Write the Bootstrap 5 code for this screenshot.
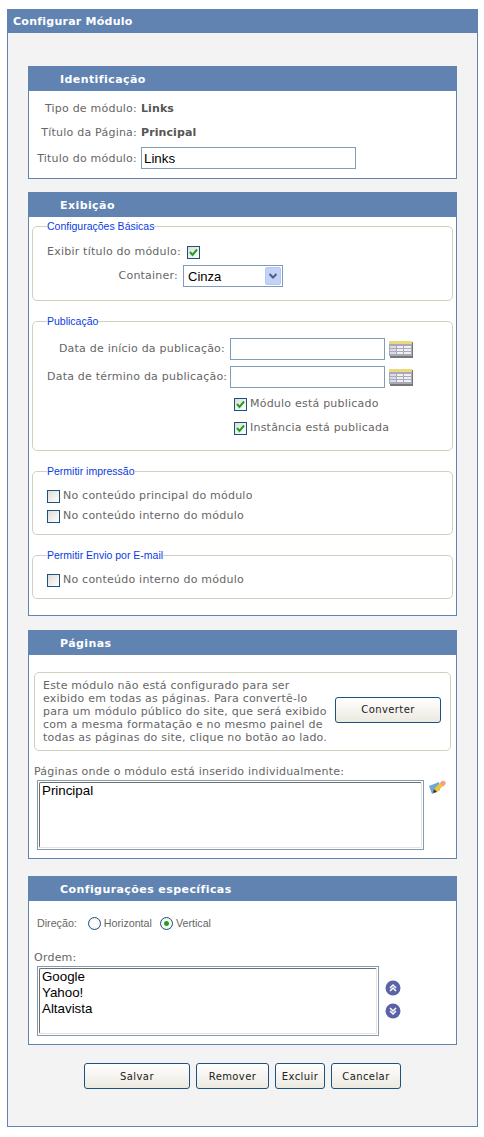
<!DOCTYPE html>
<html lang="pt-BR">

<head>
    <meta charset="UTF-8">
    <meta name="viewport" content="width=device-width, initial-scale=1.0">
    <link href="https://cdn.jsdelivr.net/npm/bootstrap@5.3.2/dist/css/bootstrap.min.css" rel="stylesheet">
    <style>
        body { background: #fff; font-family: "DejaVu Sans", Verdana, sans-serif; font-size: 11px; letter-spacing: .22px; color: #666; }
        .janela { width: 471px; height: 1118px; margin: 9px 0 0 7px; border: 1px solid #6083b2; border-top: 0; background: #f3f3f3; }
        .janela-titulo { height: 24px; margin: 0 -1px; padding-left: 6px; background: #6083b2; color: #fff; font-weight: 700; letter-spacing: .25px; line-height: 26px; }
        .conteudo { padding: 33px 20px 0; }
        .painel { width: 429px; background: #fff; border: 1px solid #6083b2; }
        .painel-titulo { height: 24px; margin: 0 -1px; padding-left: 32px; background: #6083b2; color: #fff; font-weight: 700; letter-spacing: .42px; line-height: 25px; }
        .p1 { height: 113px; margin-bottom: 13px; }
        .p2 { height: 424px; margin-bottom: 14px; }
        .p3 { height: 229px; margin-bottom: 17px; }
        .p4 { height: 169px; margin-bottom: 18px; }

        .p1-corpo { padding-top: 6px; }
        .linha { height: 24px; }
        .linha-campo { height: 24px; margin-top: 1px; }
        .linha-campo .rotulo { padding-top: 2px; }
        .linha-data { height: 28px; }
        .linha-imp { height: 20px; }
        .primeira-imp { margin-top: 9px; }
        .rotulo { flex: none; text-align: right; margin-right: 4px; white-space: nowrap; }
        .forte { font-weight: 700; letter-spacing: .1px; color: #555; }
        .rot1 { width: 108px; }
        .rot2 { width: 131px; margin-right: 5px; }
        .rot3 { width: 178px; margin-right: 5px; }

        fieldset.grupo { margin: 0 3px; padding: 0 14px; border: 1px solid #d0d0bf; border-radius: 5px; }
        fieldset.grupo legend { float: none; width: auto; margin: 0; padding: 0; font: 10.5px/12px "Liberation Sans", Arial, sans-serif; letter-spacing: 0; color: #0a3ce0; }
        .g1 { height: 81px; margin-top: 3px !important; }
        .g2 { height: 136px; margin-top: 14px !important; }
        .g3 { height: 70px; margin-top: 14px !important; }
        .g4 { height: 50px; margin-top: 14px !important; }

        input.campo { height: 22px; padding: 0 2px; border: 1px solid #7f9db9; border-radius: 0; outline: 0; font: 13.33px "Liberation Sans", Arial, sans-serif; letter-spacing: 0; color: #000; background: #fff; }
        .titulo-campo { width: 215px; }
        .campo-data { width: 155px; }
        select.combo { width: 100px; height: 22px; padding: 0 20px 0 4px; border: 1px solid #7f9db9; border-radius: 0; appearance: none; font: 13px "Liberation Sans", Arial, sans-serif; letter-spacing: 0; color: #000; background: #fff url("data:image/svg+xml,%3Csvg xmlns='http://www.w3.org/2000/svg' width='16' height='18'%3E%3Crect x='.5' y='.5' width='15' height='17' rx='1.5' fill='%23c3d3f8' stroke='%23b4c8f4'/%3E%3Cpath d='M4.5 7l3.5 3.5L11.500 7' fill='none' stroke='%234d6185' stroke-width='2'/%3E%3C/svg%3E") no-repeat right 1px center; }

        input.marca { appearance: none; flex: none; width: 13px; height: 13px; margin: 0 3px 0 0; border: 1px solid #1c5180; background: linear-gradient(135deg, #dcdcd7, #fff); }
        input.marca:checked { background-image: url("data:image/svg+xml,%3Csvg xmlns='http://www.w3.org/2000/svg' width='11' height='11'%3E%3Cpath d='M2 5l2.500 3L9 2.500' fill='none' stroke='%2321a121' stroke-width='2'/%3E%3C/svg%3E"), linear-gradient(135deg, #dcdcd7, #fff); background-size: 11px 11px, auto; background-repeat: no-repeat; }
        input.radio-x { appearance: none; flex: none; width: 13px; height: 13px; margin: 0 3px 0 0; border: 1px solid #1c5180; border-radius: 50%; background: radial-gradient(circle, #fff 40%, #e2e2dc 100%); }
        input.radio-x:checked { background: radial-gradient(circle, #21a121 0, #21a121 2px, #fff 3px, #e2e2dc 100%); }
        .recuo-pub { padding-left: 187px; }
        .recuo-pub-1 { margin-top: 1px; }

        .aviso { margin: 17px 5px 0; height: 79px; padding: 7px 8px; border: 1px solid #d0d0bf; border-radius: 5px; line-height: 13px; }
        .aviso-texto { width: 286px; flex: none; white-space: nowrap; }
        .botao { flex: none; height: 26px; padding: 0; border: 1px solid #1c5180; border-radius: 3px; background: linear-gradient(#fff, #ece9e0); font-size: 10px; letter-spacing: .4px; color: #222; }
        .botao:hover { border-color: #1c5180; background: #ece9e0; color: #222; }
        .conv { width: 106px; margin: 0 0 4px 6px; }
        .b1 { width: 106px; }
        .b2 { width: 73px; }
        .b3 { width: 50px; }
        .b4 { width: 70px; }
        .acoes { padding-left: 56px; gap: 6px; }

        .rotulo-lista { margin: 14px 0 0 5px; line-height: 13px; }
        .ordem { margin-top: 17px; }
        .recuo-lista { padding-left: 8px; margin-top: 2px; }
        .lista-borda { flex: none; height: 70px; padding: 1px; border: 1px solid #7f9db9; }
        .l1 { width: 387px; }
        .l2 { width: 342px; }
        .lista { display: block; width: 100%; height: 100%; padding: 0; overflow: hidden; border: 1px solid; border-color: #716f64 #e6e4d8 #e6e4d8 #716f64; outline: 0; font: 13.33px/16px "Liberation Sans", Arial, sans-serif; letter-spacing: 0; color: #000; background: #fff; }
        .lista option { padding: 0 2px; min-height: 16px; line-height: 16px; }
        .setas { margin: 14px 0 0 6px; gap: 7px; }

        .direcao { font: 10.7px "Liberation Sans", Arial, sans-serif; letter-spacing: 0; height: 22px; padding-left: 8px; margin-top: 11px; }
        .dir-rot { margin-right: 11px; white-space: nowrap; }
    </style>
    <title>Configurar Módulo</title>
</head>

<body class="m-0">
    <div class="janela">
        <div class="janela-titulo">Configurar Módulo</div>
        <div class="conteudo">

            <!-- Identificação -->
            <div class="painel p1">
                <div class="painel-titulo">Identificação</div>
                <div class="p1-corpo">
                    <div class="linha d-flex align-items-center">
                        <span class="rotulo rot1">Tipo de módulo:</span><span class="forte">Links</span>
                    </div>
                    <div class="linha d-flex align-items-center">
                        <span class="rotulo rot1">Título da Página:</span><span class="forte">Principal</span>
                    </div>
                    <div class="linha-campo d-flex align-items-center">
                        <span class="rotulo rot1">Titulo do módulo:</span>
                        <input class="campo titulo-campo" type="text" value="Links">
                    </div>
                </div>
            </div>

            <!-- Exibição -->
            <div class="painel p2">
                <div class="painel-titulo">Exibição</div>

                <fieldset class="grupo g1">
                    <legend>Configurações Básicas</legend>
                    <div class="d-flex align-items-center linha mt-2">
                        <span class="rotulo rot2">Exibir título do módulo:</span>
                        <input class="marca ms-1" type="checkbox" checked>
                    </div>
                    <div class="d-flex align-items-center linha">
                        <span class="rotulo rot2">Container:</span>
                        <select class="combo"><option>Cinza</option></select>
                    </div>
                </fieldset>

                <fieldset class="grupo g2">
                    <legend>Publicação</legend>
                    <div class="d-flex align-items-center linha-data mt-2">
                        <span class="rotulo rot3">Data de início da publicação:</span>
                        <input class="campo campo-data" type="text">
                        <svg class="ms-1" width="24" height="17" viewBox="0 0 24 17">
                            <rect x="1" y="1" width="23" height="16" fill="#777"/>
                            <rect x="0" y="0" width="23" height="15" fill="#a8a9bb"/>
                            <rect x="0" y="0" width="23" height="3" fill="#ead97a"/>
                            <path d="M8 5h6v2H8zM15 5h7v2h-7zM8 8h6v2H8zM15 8h7v2h-7zM8 11h6v2H8zM15 11h7v2h-7z" fill="#f0f0f0"/>
                            <path d="M1 5h6v2H1zM1 8h6v2H1zM1 11h6v2H1z" fill="#dcdce4"/>
                        </svg>
                    </div>
                    <div class="d-flex align-items-center linha-data">
                        <span class="rotulo rot3">Data de término da publicação:</span>
                        <input class="campo campo-data" type="text">
                        <svg class="ms-1" width="24" height="17" viewBox="0 0 24 17">
                            <rect x="1" y="1" width="23" height="16" fill="#777"/>
                            <rect x="0" y="0" width="23" height="15" fill="#a8a9bb"/>
                            <rect x="0" y="0" width="23" height="3" fill="#ead97a"/>
                            <path d="M8 5h6v2H8zM15 5h7v2h-7zM8 8h6v2H8zM15 8h7v2h-7zM8 11h6v2H8zM15 11h7v2h-7z" fill="#f0f0f0"/>
                            <path d="M1 5h6v2H1zM1 8h6v2H1zM1 11h6v2H1z" fill="#dcdce4"/>
                        </svg>
                    </div>
                    <label class="d-flex align-items-center linha recuo-pub recuo-pub-1"><input class="marca" type="checkbox" checked>Módulo está publicado</label>
                    <label class="d-flex align-items-center linha recuo-pub"><input class="marca" type="checkbox" checked>Instância está publicada</label>
                </fieldset>

                <fieldset class="grupo g3">
                    <legend>Permitir impressão</legend>
                    <label class="d-flex align-items-center linha-imp primeira-imp"><input class="marca" type="checkbox">No conteúdo principal do módulo</label>
                    <label class="d-flex align-items-center linha-imp"><input class="marca" type="checkbox">No conteúdo interno do módulo</label>
                </fieldset>

                <fieldset class="grupo g4">
                    <legend>Permitir Envio por E-mail</legend>
                    <label class="d-flex align-items-center linha-imp primeira-imp"><input class="marca" type="checkbox">No conteúdo interno do módulo</label>
                </fieldset>
            </div>

            <!-- Páginas -->
            <div class="painel p3">
                <div class="painel-titulo">Páginas</div>
                <div class="aviso d-flex align-items-center">
                    <div class="aviso-texto">Este módulo não está configurado para ser<br>exibido em todas as páginas. Para convertê-lo<br>para um módulo público do site, que será exibido<br>com a mesma formatação e no mesmo painel de<br>todas as páginas do site, clique no botão ao lado.</div>
                    <button type="button" class="btn botao conv">Converter</button>
                </div>
                <div class="rotulo-lista">Páginas onde o módulo está inserido individualmente:</div>
                <div class="d-flex align-items-start recuo-lista">
                    <div class="lista-borda l1">
                        <select class="lista" multiple size="4"><option>Principal</option></select>
                    </div>
                    <svg class="ms-1" width="19" height="16" viewBox="0 0 19 16">
                        <path d="M1 6l10-4 1 8-8 4z" fill="#6fa5d8"/>
                        <path d="M5 13l1-4 7-7 3 3-7 7z" fill="#f2c230"/>
                        <path d="M12 3l2-2c1-.6 2-.4 3 .6s1 2 .3 3l-2 2z" fill="#f0a08e"/>
                        <path d="M5 13l1-4 3 3z" fill="#333"/>
                    </svg>
                </div>
            </div>

            <!-- Configurações específicas -->
            <div class="painel p4">
                <div class="painel-titulo">Configurações específicas</div>
                <div class="direcao d-flex align-items-center">
                    <span class="dir-rot">Direção:</span>
                    <input class="radio-x" type="radio" name="dir"><span class="me-2">Horizontal</span>
                    <input class="radio-x" type="radio" name="dir" checked><span>Vertical</span>
                </div>
                <div class="rotulo-lista ordem">Ordem:</div>
                <div class="d-flex recuo-lista">
                    <div class="lista-borda l2">
                        <select class="lista" multiple size="4"><option>Google</option><option>Yahoo!</option><option>Altavista</option></select>
                    </div>
                    <div class="d-flex flex-column setas">
                        <svg width="16" height="16" viewBox="0 0 16 16"><circle cx="8" cy="8" r="7.500" fill="#5a63a8"/><path d="M5 8l3-3 3 3M5 11l3-3 3 3" fill="none" stroke="#fff" stroke-width="1.500"/></svg>
                        <svg width="16" height="16" viewBox="0 0 16 16"><circle cx="8" cy="8" r="7.500" fill="#5a63a8"/><path d="M5 5l3 3 3-3M5 8l3 3 3-3" fill="none" stroke="#fff" stroke-width="1.500"/></svg>
                    </div>
                </div>
            </div>

            <div class="d-flex acoes">
                <button type="button" class="btn botao b1">Salvar</button>
                <button type="button" class="btn botao b2">Remover</button>
                <button type="button" class="btn botao b3">Excluir</button>
                <button type="button" class="btn botao b4">Cancelar</button>
            </div>
        </div>
    </div>
</body>

</html>
